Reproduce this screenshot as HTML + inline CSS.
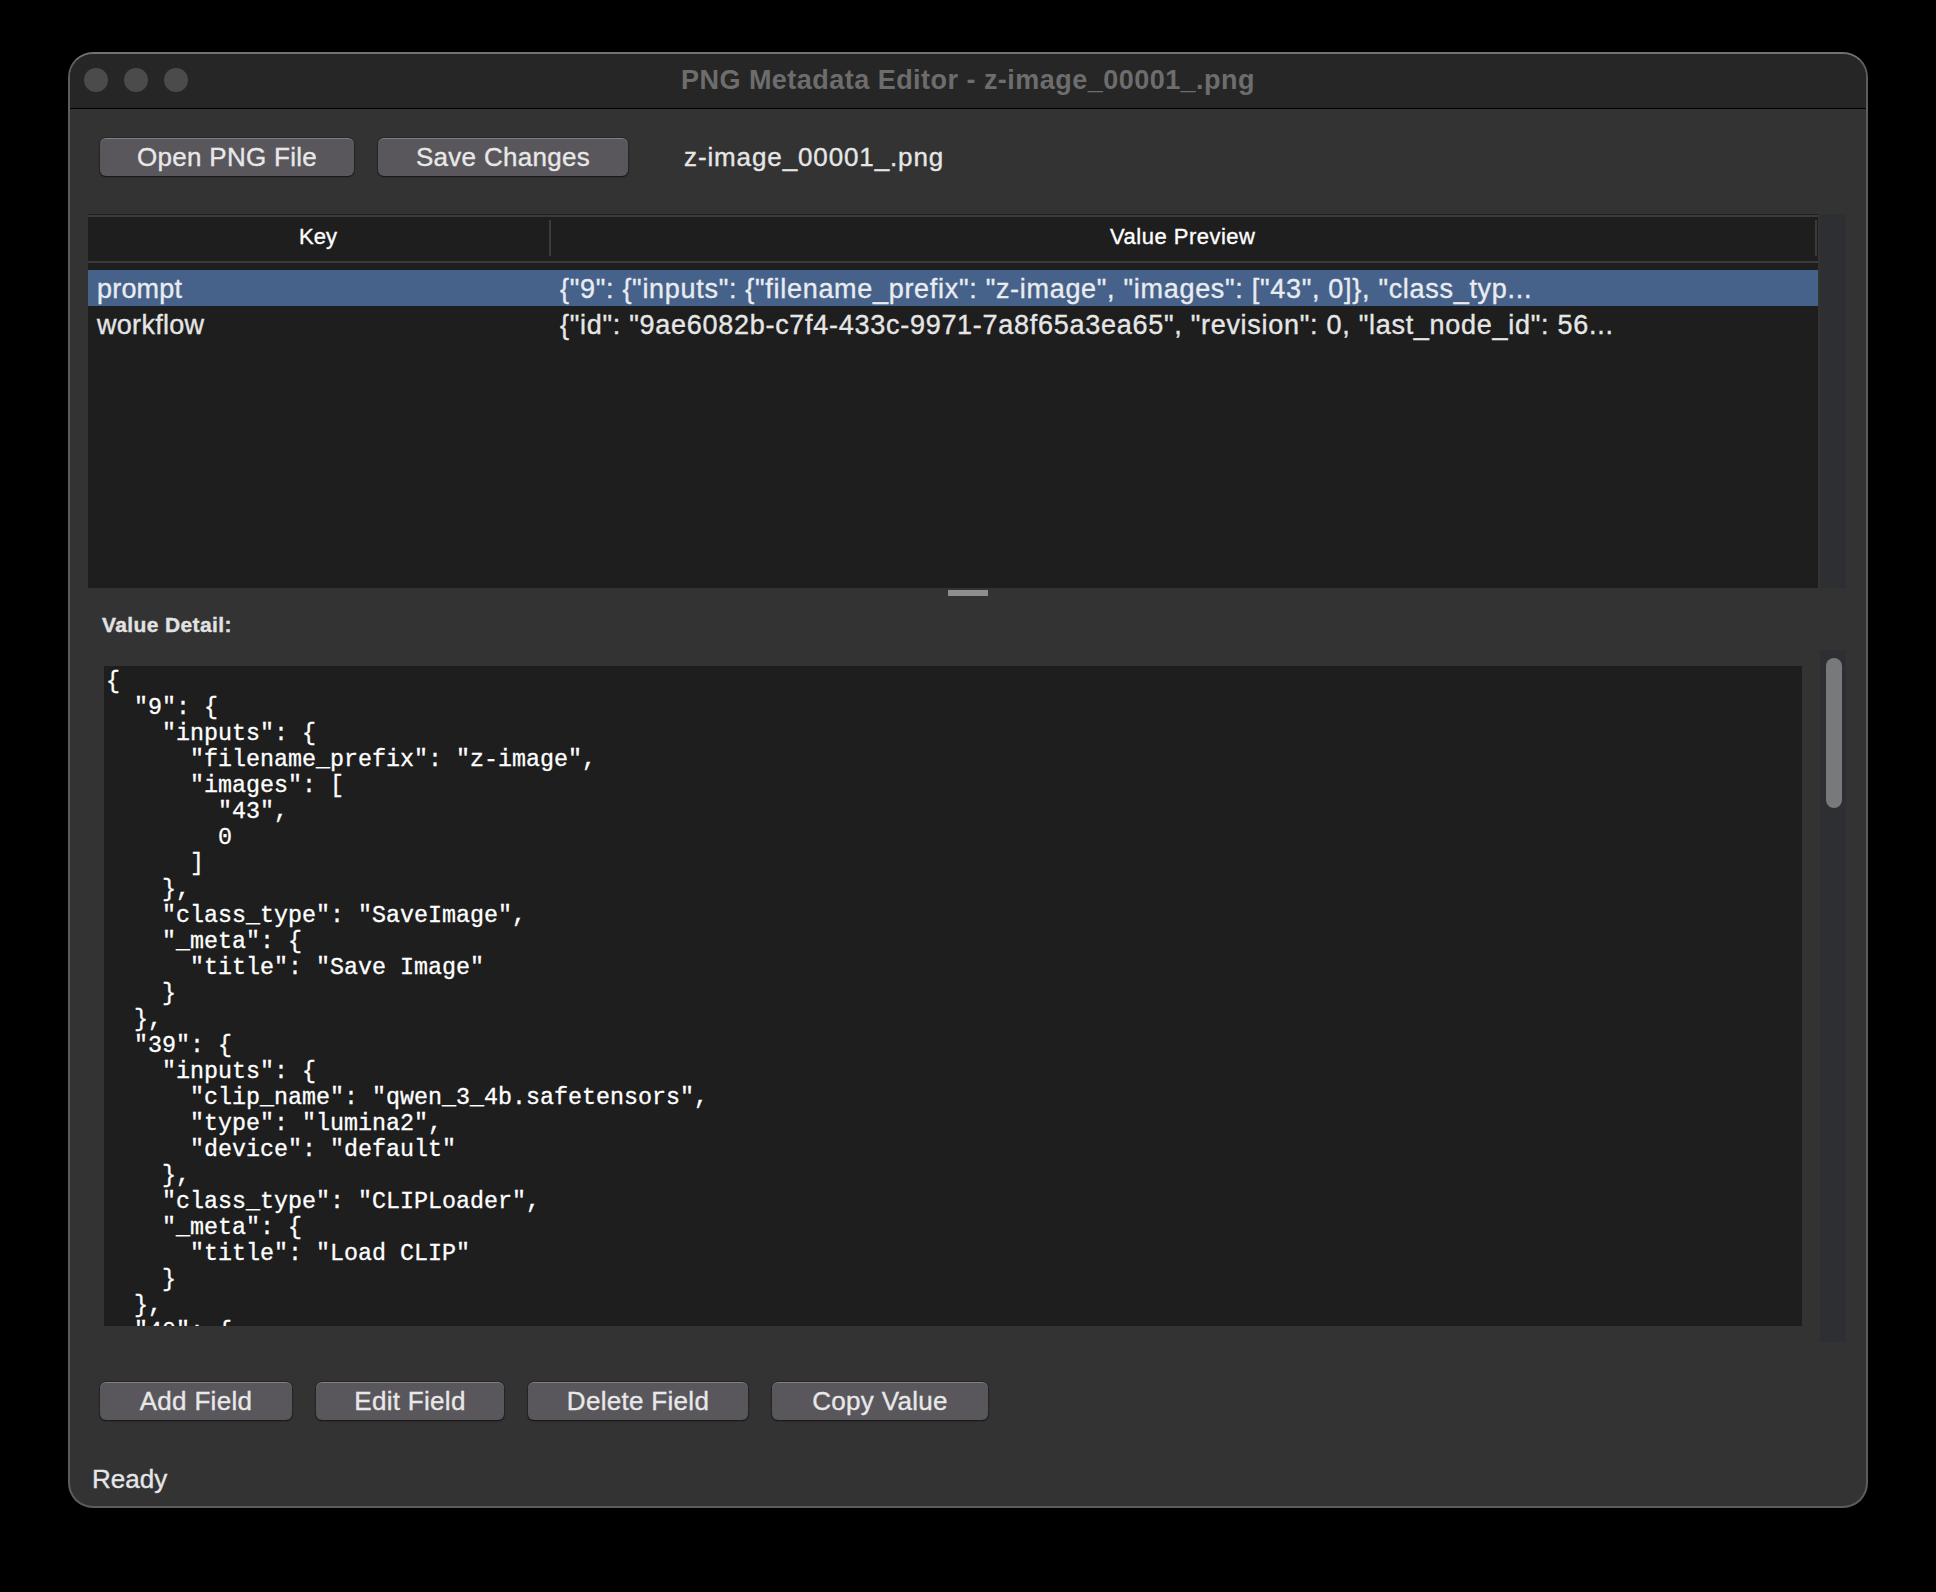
<!DOCTYPE html>
<html><head><meta charset="utf-8">
<style>
*{margin:0;padding:0;box-sizing:border-box}
html,body{width:1936px;height:1592px;background:#000;overflow:hidden}
body{position:relative;font-family:"Liberation Sans",sans-serif;color:#e6e6e6}
.btn,.lbl{-webkit-text-stroke:0.35px currentColor}
.abs{position:absolute}
#win{position:absolute;left:68px;top:52px;width:1800px;height:1456px;border-radius:25px;background:#333333;border:2px solid #5c5c5c;border-top-color:#727272;overflow:hidden}
#titlebar{position:absolute;left:0;top:0;width:1796px;height:55px;background:#262626;border-bottom:1px solid #000}
.tl{position:absolute;top:14px;width:24px;height:24px;border-radius:50%;background:#4b4b4b}
#title{position:absolute;left:0;top:0;width:1796px;text-align:center;font-weight:700;font-size:26px;color:#6d6d6d;white-space:pre}
.btn{position:absolute;height:38px;letter-spacing:0.3px;border-radius:6px;background:#59565c;border-top:1px solid #817e84;box-shadow:0 0 0 1px rgba(20,20,20,.35),0 1px 1.5px rgba(0,0,0,.55);color:#e8e8e8;font-size:26px;text-align:center;white-space:pre}
.lbl{position:absolute;white-space:pre;font-size:26px;color:#e6e6e6}
#tree{position:absolute;left:88px;top:214px;width:1730px;height:374px;background:#1e1e1e}
#track1{position:absolute;left:1820px;top:214px;width:26px;height:374px;background:#2e2f32}
.hdrline{position:absolute;left:0;width:1730px;height:2px;background:#3b3b3b}
.colsep{position:absolute;width:2px;background:#3b3b3b}
.row{position:absolute;left:0;width:1730px;height:36px}
#mono{position:absolute;left:104px;top:666px;width:1698px;height:660px;background:#1e1e1e;overflow:hidden}
#mono pre{position:absolute;left:2px;top:3px;font-family:"Liberation Mono",monospace;font-size:23.33px;line-height:26px;color:#ffffff;-webkit-text-stroke:0.3px #fff}
#track2{position:absolute;left:1820px;top:650px;width:26px;height:692px;background:#2e2f32}
#thumb{position:absolute;left:1826px;top:658px;width:16px;height:150px;border-radius:8px;background:#78797b}
</style></head><body>
<div id="win">
  <div id="titlebar">
    <div class="tl" style="left:14px"></div>
    <div class="tl" style="left:54px"></div>
    <div class="tl" style="left:94px"></div>
  </div>
</div>
<div id="title" class="abs" style="left:70px;top:64.5px;width:1796px;font-size:27px;letter-spacing:0.47px">PNG Metadata Editor - z-image_00001_.png</div>

<div class="btn" style="left:100px;top:138px;width:254px;line-height:36px">Open PNG File</div>
<div class="btn" style="left:378px;top:138px;width:250px;line-height:36px">Save Changes</div>
<div class="lbl" style="left:684px;top:141px;line-height:32px;letter-spacing:0.88px">z-image_00001_.png</div>

<div id="tree">
  <div class="abs" style="left:0;top:0;width:1730px;height:1px;background:#1e1e1e"></div><div class="hdrline" style="top:1px"></div>
  <div class="hdrline" style="top:47px"></div>
  <div class="colsep" style="left:461px;top:6px;height:36px"></div>
  <div class="colsep" style="left:1727px;top:6px;height:36px"></div>
  <div class="lbl" style="left:211px;top:7px;font-size:22px;line-height:32px;color:#fff;font-weight:500">Key</div>
  <div class="lbl" style="left:1022px;top:7px;font-size:22px;line-height:32px;color:#fff;font-weight:500;letter-spacing:0.5px">Value Preview</div>
  <div class="row" style="top:56px;background:#46628a"></div>
  <div class="lbl" style="left:9px;top:59px;line-height:32px;font-size:27px;color:#e9ecf0;letter-spacing:0.2px">prompt</div>
  <div class="lbl" style="left:472px;top:59px;line-height:32px;font-size:27px;color:#e9ecf0;letter-spacing:0.7px">{"9": {"inputs": {"filename_prefix": "z-image", "images": ["43", 0]}, "class_typ...</div>
  <div class="lbl" style="left:9px;top:95px;line-height:32px;font-size:27px;letter-spacing:0.3px">workflow</div>
  <div class="lbl" style="left:472px;top:95px;line-height:32px;font-size:27px;letter-spacing:0.72px">{"id": "9ae6082b-c7f4-433c-9971-7a8f65a3ea65", "revision": 0, "last_node_id": 56...</div>
</div>
<div id="track1"></div>
<div class="abs" style="left:948px;top:590px;width:40px;height:6px;background:#8e8e8e"></div>

<div class="lbl" style="left:102px;top:610px;font-size:21px;font-weight:700;line-height:30px;color:#e2e2e2;letter-spacing:0.38px">Value Detail:</div>

<div id="mono"><pre>{
  "9": {
    "inputs": {
      "filename_prefix": "z-image",
      "images": [
        "43",
        0
      ]
    },
    "class_type": "SaveImage",
    "_meta": {
      "title": "Save Image"
    }
  },
  "39": {
    "inputs": {
      "clip_name": "qwen_3_4b.safetensors",
      "type": "lumina2",
      "device": "default"
    },
    "class_type": "CLIPLoader",
    "_meta": {
      "title": "Load CLIP"
    }
  },
  "40": {
</pre></div>
<div id="track2"></div>
<div id="thumb"></div>

<div class="btn" style="left:100px;top:1382px;width:192px;line-height:36px">Add Field</div>
<div class="btn" style="left:316px;top:1382px;width:188px;line-height:36px">Edit Field</div>
<div class="btn" style="left:528px;top:1382px;width:220px;line-height:36px">Delete Field</div>
<div class="btn" style="left:772px;top:1382px;width:216px;line-height:36px">Copy Value</div>

<div class="lbl" style="left:92px;top:1463px;line-height:32px">Ready</div>
</body></html>
